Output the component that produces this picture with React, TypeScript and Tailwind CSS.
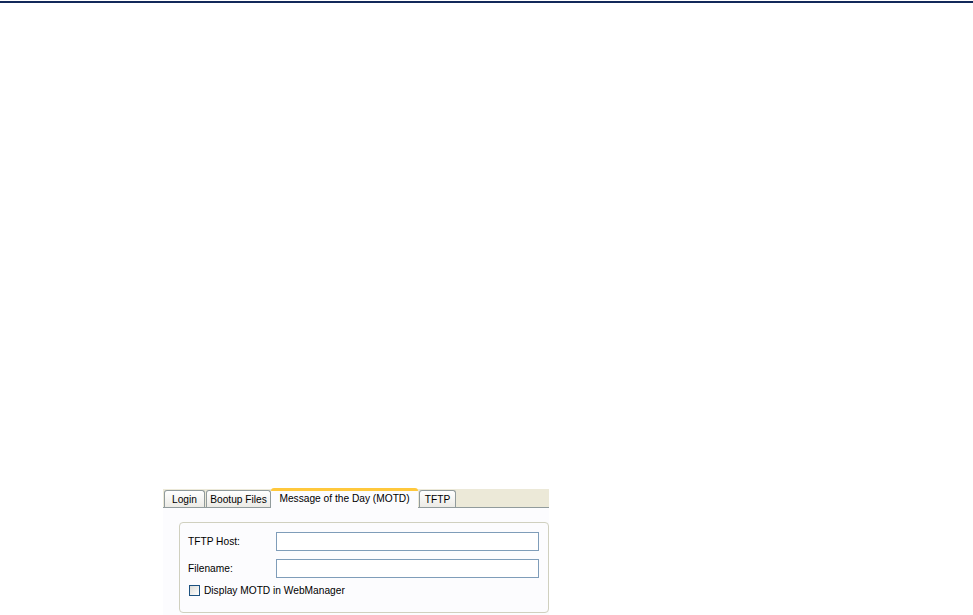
const font = { fontFamily: '"Liberation Sans", Arial, sans-serif' };

function Tab({ label, active, className }: { label: string; active?: boolean; className: string }) {
  if (active) {
    return (
      <div className={`relative -mb-px flex h-[20px] items-start justify-center rounded-t-[3px] border-t-[3px] border-[#ffc83c] bg-[#fcfcfe] pt-[1px] text-[10.2px] leading-[13px] text-black ${className}`}>
        {label}
      </div>
    );
  }
  return (
    <div className={`flex h-[17px] items-center justify-center rounded-t-[3px] border border-b-0 border-[#919b9c] bg-gradient-to-b from-white to-[#ecebe6] text-[10.2px] leading-[13px] text-black ${className}`}>
      {label}
    </div>
  );
}

export default function App() {
  return (
    <div className="flex h-[615px] w-[973px] flex-col bg-white" style={font}>
      <div className="mt-[1px] h-[2px] w-full bg-[#13295a]" />
      <div className="ml-[163px] mt-[486px] flex w-[386px] flex-col">
        <div className="flex h-[19px] items-end border-b border-[#919b9c] bg-[#ece9d8]">
          <Tab label="Login" className="ml-[1px] w-[41px]" />
          <Tab label="Bootup Files" className="ml-[1px] w-[65px]" />
          <Tab label="Message of the Day (MOTD)" active className="w-[147px]" />
          <Tab label="TFTP" className="ml-[1px] w-[37px]" />
        </div>
        <div className="h-[107px] bg-[#fcfcfe] pl-[16px] pt-[14px]">
          <div className="flex h-[91px] w-[370px] flex-col gap-[9px] rounded-[4px] border border-[#d0d0bf] pl-[8px] pt-[9px] text-[10.2px] text-black">
            <div className="flex items-center">
              <span className="w-[88px]">TFTP Host:</span>
              <input className="h-[19px] w-[263px] border border-[#7f9db9] bg-white outline-none" />
            </div>
            <div className="-mt-[1px] flex items-center">
              <span className="w-[88px]">Filename:</span>
              <input className="h-[19px] w-[263px] border border-[#7f9db9] bg-white outline-none" />
            </div>
            <div className="-mt-[4px] flex items-center gap-[4px] pl-[1px]">
              <span className="h-[11px] w-[11px] border border-[#1c5180] bg-gradient-to-br from-[#dcdcd7] to-white" />
              <span>Display MOTD in WebManager</span>
            </div>
          </div>
        </div>
      </div>
    </div>
  );
}
